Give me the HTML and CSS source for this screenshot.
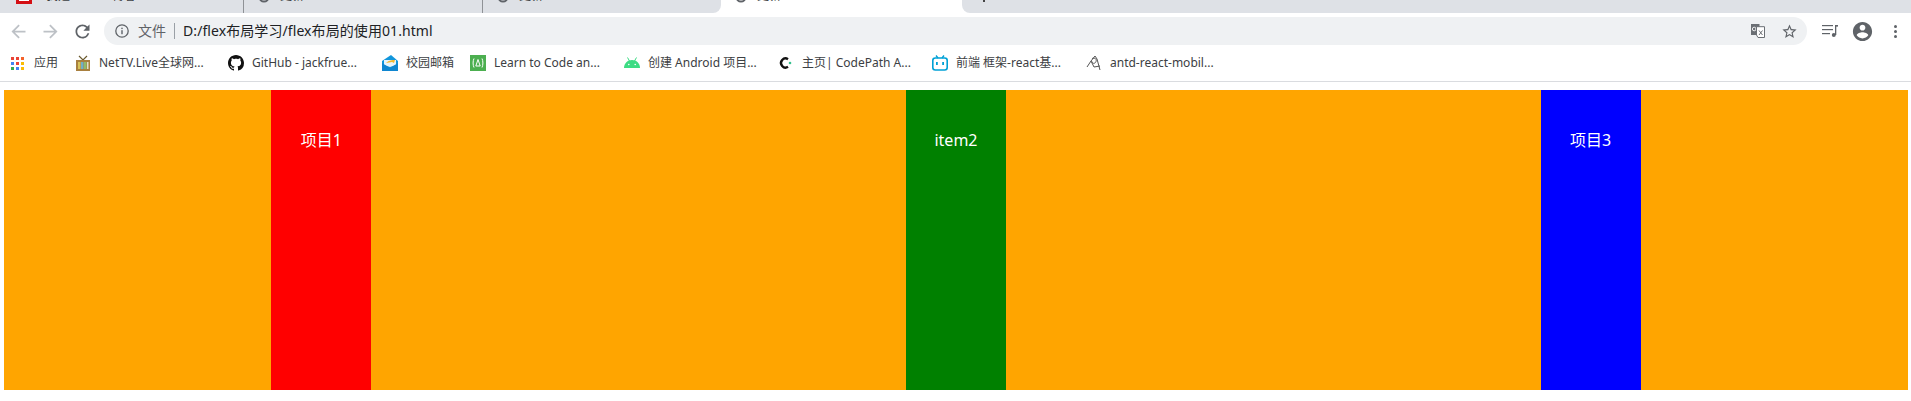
FILE: index.html
```html
<!DOCTYPE html>
<html lang="zh-CN">
<head>
    <meta charset="UTF-8">
    <title>flex布局的使用01</title>
    <link rel="stylesheet" href="styles.css">
</head>
<body>
    <!-- Tab strip, cut off at the top of the screenshot -->
    <div class="tabs">
        <div class="tab tab-first">
            <span class="favicon-red"></span>
            <span class="tab-title">我是 - CSDN博客</span>
        </div>
        <div class="tab">
            <svg class="tab-spin" viewBox="0 0 12 12"><circle cx="6" cy="6" r="4.5"/></svg>
            <span class="tab-title">更新</span>
        </div>
        <div class="tab tab-before">
            <svg class="tab-spin" viewBox="0 0 12 12"><circle cx="6" cy="6" r="4.5"/></svg>
            <span class="tab-title">更新</span>
        </div>
        <div class="tab tab-active">
            <svg class="tab-spin" viewBox="0 0 12 12"><circle cx="6" cy="6" r="4.5"/></svg>
            <span class="tab-title">更新</span>
        </div>
        <div class="tab tab-after">
            <span class="tab-mark"></span>
        </div>
    </div>

    <!-- Address bar -->
    <div class="toolbar">
        <span class="tool"><svg class="ico-nav off" viewBox="0 0 24 24"><path d="M20 11H7.83l5.59-5.59L12 4l-8 8 8 8 1.41-1.41L7.83 13H20v-2z"/></svg></span>
        <span class="tool"><svg class="ico-nav off" viewBox="0 0 24 24"><path d="M4 11h12.17l-5.59-5.59L12 4l8 8-8 8-1.41-1.41L16.17 13H4v-2z"/></svg></span>
        <span class="tool"><svg class="ico-nav" viewBox="0 0 24 24"><path d="M17.65 6.35A7.958 7.958 0 0 0 12 4c-4.42 0-7.99 3.58-7.99 8s3.57 8 7.99 8c3.73 0 6.84-2.55 7.73-6h-2.08A5.99 5.99 0 0 1 12 18c-3.31 0-6-2.69-6-6s2.69-6 6-6c1.66 0 3.14.69 4.22 1.78L13 11h7V4l-2.35 2.35z"/></svg></span>
        <div class="omnibox">
            <svg class="ico-info" viewBox="0 0 14 14">
                <circle cx="7" cy="7" r="6.2" fill="none" stroke="#5f6368" stroke-width="1.3"/>
                <rect x="6.3" y="6.2" width="1.4" height="4" fill="#5f6368"/>
                <rect x="6.3" y="3.7" width="1.4" height="1.4" fill="#5f6368"/>
            </svg>
            <span class="scheme">文件</span>
            <span class="url">D:/flex布局学习/flex布局的使用01.html</span>
            <svg class="ico-translate" viewBox="0 0 14 14">
                <rect x="0" y="0" width="8.5" height="11" fill="#6b6f74"/>
                <circle cx="3.2" cy="5" r="1.8" fill="none" stroke="#fff" stroke-width="0.9"/>
                <path d="M5.5 2.7h8v10.800h-6.500L5.500 11z" fill="#fff" stroke="#6b6f74"/>
                <path d="M8 6.500l3.500 4.500M11.500 6.500L8 11" stroke="#6b6f74" fill="none"/>
            </svg>
            <svg class="ico-star" viewBox="0 0 24 24"><path d="M22 9.24l-7.19-.62L12 2 9.19 8.63 2 9.24l5.46 4.73L5.82 21 12 17.27 18.18 21l-1.63-7.03L22 9.24zM12 15.4l-3.76 2.27 1-4.28-3.32-2.88 4.38-.38L12 6.1l1.71 4.04 4.38.38-3.32 2.88 1 4.28L12 15.4z"/></svg>
        </div>
        <span class="tool tool-first"><svg class="ico-queue" viewBox="0 0 16 12">
            <rect x="0" y="0" width="11" height="1.2"/>
            <rect x="0" y="4" width="11" height="1.2"/>
            <rect x="0" y="8" width="8" height="1.2"/>
            <rect x="13" y="0" width="1.3" height="10"/>
            <rect x="13" y="0" width="3" height="1.6"/>
            <circle cx="11.8" cy="10" r="2"/>
        </svg></span>
        <span class="tool"><svg class="ico-user" viewBox="0 0 24 24"><path d="M12 2C6.48 2 2 6.48 2 12s4.48 10 10 10 10-4.48 10-10S17.52 2 12 2zm0 3c1.66 0 3 1.34 3 3s-1.34 3-3 3-3-1.34-3-3 1.34-3 3-3zm0 14.2c-2.5 0-4.71-1.28-6-3.22.03-1.99 4-3.08 6-3.08 1.99 0 5.97 1.09 6 3.08-1.29 1.94-3.5 3.22-6 3.22z"/></svg></span>
        <span class="tool dots"><i></i><i></i><i></i></span>
    </div>

    <!-- Bookmarks -->
    <div class="bookmarks">
        <div class="mark">
            <svg class="fav-apps" viewBox="0 0 13 13">
                <rect x="0" y="0" width="3" height="3" fill="#ea4335"/><rect x="5" y="0" width="3" height="3" fill="#ea4335"/><rect x="10" y="0" width="3" height="3" fill="#f4622a"/>
                <rect x="0" y="5" width="3" height="3" fill="#4285f4"/><rect x="5" y="5" width="3" height="3" fill="#ea4335"/><rect x="10" y="5" width="3" height="3" fill="#fbbc04"/>
                <rect x="0" y="10" width="3" height="3" fill="#34a853"/><rect x="5" y="10" width="3" height="3" fill="#4285f4"/><rect x="10" y="10" width="3" height="3" fill="#fbbc04"/>
            </svg>
            <span>应用</span>
        </div>
        <div class="mark">
            <svg class="fav" viewBox="0 0 16 16">
                <path d="M4 1l4 4 4-4" fill="none" stroke="#6b5a2e" stroke-width="1.2"/>
                <rect x="1" y="5" width="14" height="11" fill="#a9803f"/>
                <rect x="3" y="7" width="2.5" height="7" fill="#d8c35a"/>
                <rect x="6" y="7" width="2.5" height="7" fill="#6fb0c8"/>
                <rect x="9" y="7" width="2.5" height="7" fill="#8fbc6a"/>
                <rect x="12" y="7" width="1.5" height="7" fill="#e2e0c8"/>
            </svg>
            <span>NetTV.Live全球网...</span>
        </div>
        <div class="mark">
            <svg class="fav" viewBox="0 0 16 16"><path fill="#111" d="M8 0C3.58 0 0 3.58 0 8c0 3.54 2.29 6.53 5.47 7.59.4.07.55-.17.55-.38 0-.19-.01-.82-.01-1.49-2.01.37-2.53-.49-2.69-.94-.09-.23-.48-.94-.82-1.13-.28-.15-.68-.52-.01-.53.63-.01 1.08.58 1.23.82.72 1.21 1.87.87 2.33.66.07-.52.28-.87.51-1.07-1.78-.2-3.64-.89-3.64-3.95 0-.87.31-1.59.82-2.15-.08-.2-.36-1.02.08-2.12 0 0 .67-.21 2.2.82.64-.18 1.32-.27 2-.27.68 0 1.36.09 2 .27 1.53-1.04 2.2-.82 2.2-.82.44 1.1.16 1.92.08 2.12.51.56.82 1.27.82 2.15 0 3.07-1.87 3.75-3.65 3.95.29.25.54.73.54 1.48 0 1.07-.01 1.93-.01 2.2 0 .21.15.46.55.38A8.013 8.013 0 0 0 16 8c0-4.42-3.58-8-8-8z"/></svg>
            <span>GitHub - jackfrue...</span>
        </div>
        <div class="mark">
            <svg class="fav" viewBox="0 0 16 16">
                <path d="M0 6L9 0l7 6v10H0z" fill="#1296db"/>
                <path d="M2 5h12v5l-6 2-6-2z" fill="#e6f4fc"/>
                <path d="M4 8c3-3 6-3 9-3l-1 3-2-1z" fill="#f5b92e"/>
                <path d="M0 8l8 5 8-5v8H0z" fill="#0f86d0"/>
            </svg>
            <span>校园邮箱</span>
        </div>
        <div class="mark">
            <svg class="fav" viewBox="0 0 16 16">
                <rect width="16" height="16" fill="#4caf50"/>
                <path d="M4 3.500C2.800 6 2.800 10 4 12.500M12 3.500c1.200 2.500 1.200 6.500 0 9M8 4.500L5.800 11h4.400z" fill="none" stroke="#fff" stroke-width="1"/>
            </svg>
            <span>Learn to Code an...</span>
        </div>
        <div class="mark">
            <svg class="fav" viewBox="0 0 16 16">
                <path d="M0 13C0 8.500 3.500 5 8 5s8 3.500 8 8z" fill="#3ddc84"/>
                <path d="M3.500 2.500L5.500 6M12.500 2.500L10.500 6" stroke="#3ddc84" stroke-width="1"/>
                <circle cx="4.800" cy="9.500" r="0.800" fill="#fff"/><circle cx="11.200" cy="9.500" r="0.800" fill="#fff"/>
            </svg>
            <span>创建 Android 项目...</span>
        </div>
        <div class="mark">
            <svg class="fav" viewBox="0 0 16 16">
                <path d="M10 4.200A4.500 4.500 0 1 0 10 11.800" fill="none" stroke="#111" stroke-width="2.400"/>
                <circle cx="12" cy="8" r="1.300" fill="#35c08e"/>
            </svg>
            <span>主页| CodePath A...</span>
        </div>
        <div class="mark">
            <svg class="fav" viewBox="0 0 16 16">
                <path d="M4 0.500L6 3M12 0.500L10 3" stroke="#00a1d6" stroke-width="1.400"/>
                <rect x="0.800" y="3" width="14.400" height="12" rx="2.500" fill="none" stroke="#00a1d6" stroke-width="1.600"/>
                <rect x="4" y="7" width="1.800" height="3" fill="#00a1d6"/>
                <rect x="10.200" y="7" width="1.800" height="3" fill="#00a1d6"/>
            </svg>
            <span>前端 框架-react基...</span>
        </div>
        <div class="mark">
            <svg class="fav" viewBox="0 0 16 16">
                <path d="M1 12L5 6l3 6M9 1L5 6M9 1l2 3 3 11M6 3.500c3-1 5 .500 4 3S6.500 9 6 6.500M8 12l6-1" fill="none" stroke="#555" stroke-width="1"/>
            </svg>
            <span>antd-react-mobil...</span>
        </div>
    </div>

    <!-- The page itself: flex with space-around -->
    <div class="box">
        <div class="item item-red">项目1</div>
        <div class="item item-green">item2</div>
        <div class="item item-blue">项目3</div>
    </div>
</body>
</html>
```

FILE: styles.css
```css
* {
    margin: 0;
    padding: 0;
    box-sizing: border-box;
}

body {
    background: #fff;
    font-family: "Noto Sans", "Noto Sans CJK SC", sans-serif;
    overflow: hidden;
}

/* tabs */
.tabs {
    display: flex;
    height: 13px;
    overflow: hidden;
    background: #fff;
}

.tab {
    display: flex;
    align-items: flex-end;
    flex: 0 0 239px;
    height: 13px;
    padding-left: 14px;
    padding-bottom: 10px;
    background: #dee1e6;
    border-right: 1px solid #8f9296;
    color: #3c4043;
    font-size: 12px;
    line-height: 16px;
}

.tab-first {
    flex-basis: 244px;
    padding-left: 16px;
}

.tab-before {
    flex-basis: 238px;
    border-right: none;
    border-bottom-right-radius: 8px;
}

.tab-active {
    flex-basis: 241px;
    background: #fff;
    border-right: none;
}

.tab-after {
    flex: 1;
    border-right: none;
    border-bottom-left-radius: 8px;
    padding-left: 21px;
    padding-bottom: 11px;
}

.tab-title {
    margin-bottom: -1px;
    margin-left: 10px;
}

.tab-first .tab-title {
    margin-left: 14px;
}

.tab-spin {
    width: 12px;
    height: 12px;
    fill: none;
    stroke: #5f6368;
    stroke-width: 2;
}

.favicon-red {
    width: 16px;
    height: 12px;
    margin-bottom: -1px;
    background: #fff;
    border: 3px solid #d40f14;
}

.tab-mark {
    width: 2px;
    height: 2px;
    background: #444;
}

/* address bar */
.toolbar {
    display: flex;
    align-items: center;
    height: 35px;
    padding: 4px 0 3px 2px;
    background: #fff;
}

.tool {
    display: flex;
    align-items: center;
    justify-content: center;
    flex: 0 0 32px;
    height: 28px;
}

.tool-first {
    margin-left: 7px;
}

.ico-nav {
    width: 21px;
    height: 21px;
    fill: #5f6368;
}

.ico-nav.off {
    fill: #bdc1c6;
}

.omnibox {
    display: flex;
    align-items: center;
    flex: 0 0 1703px;
    height: 28px;
    margin-left: 6px;
    padding: 0 10px 0 11px;
    background: #eff1f3;
    border-radius: 14px;
}

.ico-info {
    flex: none;
    width: 14px;
    height: 14px;
}

.scheme {
    margin-left: 9px;
    padding-right: 8px;
    border-right: 1px solid #9aa0a6;
    color: #5f6368;
    font-size: 14px;
    line-height: 16px;
}

.url {
    flex: 1;
    margin-left: 8px;
    color: #202124;
    font-size: 14px;
    letter-spacing: 0.08px;
    line-height: 20px;
}

.ico-translate {
    flex: none;
    width: 14px;
    height: 14px;
    margin-right: 16px;
}

.ico-star {
    flex: none;
    width: 17px;
    height: 17px;
    margin-right: -1px;
    fill: #5f6368;
}

.ico-queue {
    width: 16px;
    height: 12px;
    fill: #5f6368;
}

.ico-user {
    width: 23px;
    height: 23px;
    fill: #5f6368;
}

.dots {
    flex-direction: column;
    gap: 2px;
    margin-left: 1px;
}

.dots i {
    width: 3px;
    height: 3px;
    border-radius: 50%;
    background: #5f6368;
}

/* bookmarks */
.bookmarks {
    display: grid;
    grid-template-columns: 64px 153px 154px 88px 154px 154px 154px 154px auto;
    align-items: center;
    height: 34px;
    padding: 0 0 3px 11px;
    background: #fff;
    border-bottom: 1px solid #dadce0;
}

.mark {
    display: flex;
    align-items: center;
    color: #3c4043;
    font-size: 12px;
    line-height: 16px;
    white-space: nowrap;
}

.fav {
    flex: none;
    width: 16px;
    height: 16px;
    margin-right: 8px;
}

.fav-apps {
    flex: none;
    width: 13px;
    height: 13px;
    margin-right: 10px;
}

/* page content */
.box {
    display: flex;
    justify-content: space-around;
    height: 300px;
    margin: 8px 3px 0 4px;
    background: orange;
}

.item {
    width: 100px;
    color: #fff;
    font-size: 16px;
    line-height: 100px;
    text-align: center;
}

.item-red {
    background: red;
}

.item-green {
    background: green;
}

.item-blue {
    background: blue;
}
```
